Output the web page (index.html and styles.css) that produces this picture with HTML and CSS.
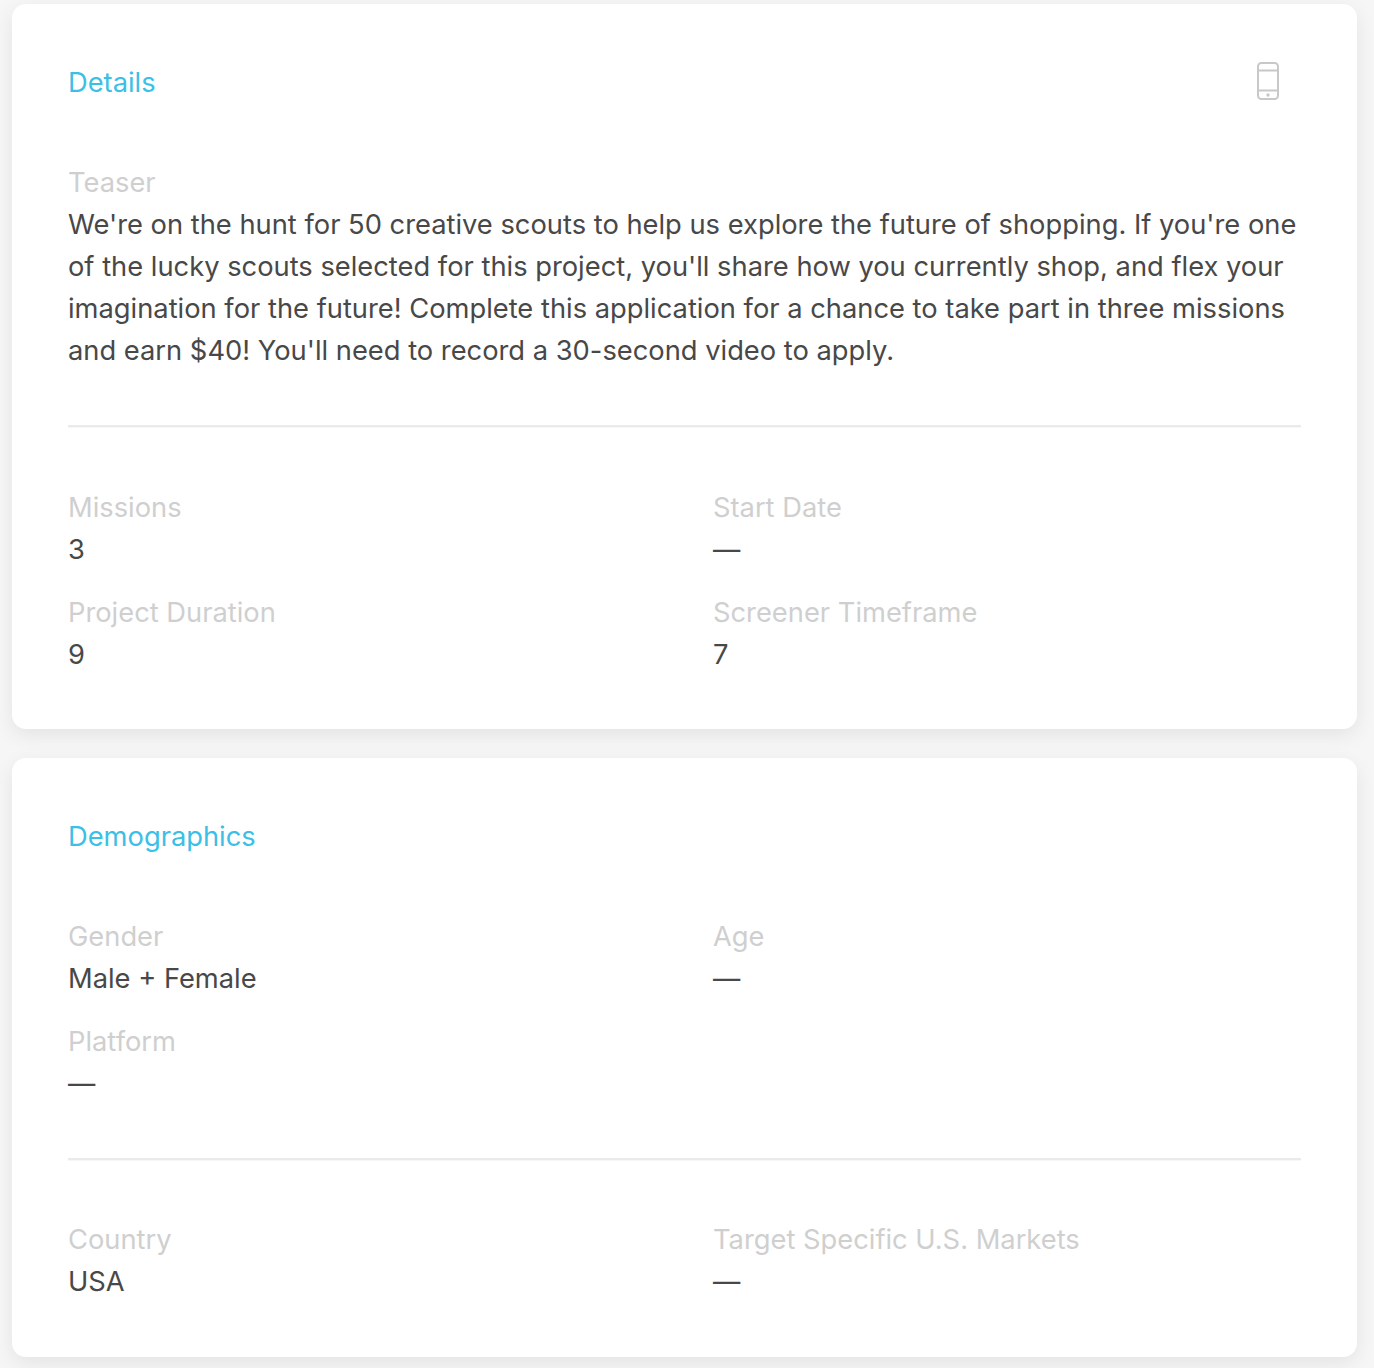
FILE: index.html
```html
<!DOCTYPE html>
<html lang="en">
<head>
  <meta charset="UTF-8">
  <title>Project Details</title>
  <link rel="stylesheet" href="styles.css">
</head>
<body>

  <section class="card card-details">
    <div class="card-head">
      <h2 class="card-title">Details</h2>
      <svg class="device-icon" width="24" height="40" viewBox="0 0 24 40" fill="none" stroke="#c8c8c8" stroke-width="2">
        <rect x="2" y="2" width="20" height="36" rx="3.5"/>
        <path d="M2 9.5h20M2 29.5h20"/>
        <circle cx="12" cy="34" r="1.7" fill="#c8c8c8" stroke="none"/>
      </svg>
    </div>

    <div class="field">
      <div class="label">Teaser</div>
      <div class="value">We're on the hunt for 50 creative scouts to help us explore the future of shopping. If you're one of the lucky scouts selected for this project, you'll share how you currently shop, and flex your imagination for the future! Complete this application for a chance to take part in three missions and earn $40! You'll need to record a 30-second video to apply.</div>
    </div>

    <hr class="divider">

    <div class="fields">
      <div class="field">
        <div class="label">Missions</div>
        <div class="value">3</div>
      </div>
      <div class="field">
        <div class="label">Start Date</div>
        <div class="value">—</div>
      </div>
      <div class="field">
        <div class="label">Project Duration</div>
        <div class="value">9</div>
      </div>
      <div class="field">
        <div class="label">Screener Timeframe</div>
        <div class="value">7</div>
      </div>
    </div>
  </section>

  <section class="card card-demographics">
    <div class="card-head">
      <h2 class="card-title">Demographics</h2>
    </div>

    <div class="fields">
      <div class="field">
        <div class="label">Gender</div>
        <div class="value">Male + Female</div>
      </div>
      <div class="field">
        <div class="label">Age</div>
        <div class="value">—</div>
      </div>
      <div class="field">
        <div class="label">Platform</div>
        <div class="value">—</div>
      </div>
    </div>

    <hr class="divider">

    <div class="fields">
      <div class="field">
        <div class="label">Country</div>
        <div class="value">USA</div>
      </div>
      <div class="field">
        <div class="label">Target Specific U.S. Markets</div>
        <div class="value">—</div>
      </div>
    </div>
  </section>

</body>
</html>
```

FILE: styles.css
```css
* {
  box-sizing: border-box;
}

html, body {
  margin: 0;
  height: 100%;
}

body {
  background: #f6f6f6;
  padding: 4px 17px 0 12px;
  font-family: "Inter", "Liberation Sans", sans-serif;
  font-size: 27.3px;
  line-height: 42px;
  overflow: hidden;
}

.card {
  background: #fff;
  border-radius: 14px;
  padding: 58px 56px 54px;
  box-shadow: 0 6px 20px rgba(0, 0, 0, 0.08);
}

.card-details {
  padding-bottom: 53px;
}

.card-demographics {
  margin-top: 29px;
}

.card-head {
  display: flex;
  justify-content: space-between;
  align-items: center;
  height: 42px;
  margin-bottom: 58px;
}

.card-title {
  margin: 0;
  font-size: 27.3px;
  font-weight: 400;
  color: #3cbfe6;
}

.device-icon {
  margin: 0 21px 4px 0;
}

.label {
  color: #cfcfcf;
}

.value {
  color: #484848;
}

.divider {
  border: 0;
  border-top: 2px solid #eaeaea;
  box-shadow: 0 1px 0 #f7f7f7;
  margin: 53px 0 59px;
}

.card-details .divider {
  margin-bottom: 60px;
}

.fields {
  display: grid;
  grid-template-columns: 645px 1fr;
  row-gap: 21px;
}
```
